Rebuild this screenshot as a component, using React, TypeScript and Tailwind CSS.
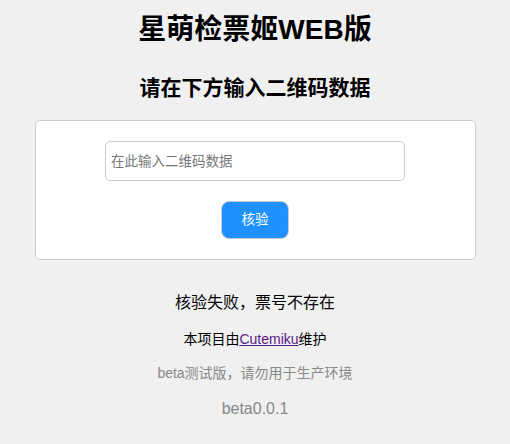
export default function App() {
  const font = { fontFamily: '"Liberation Sans", "Noto Sans CJK SC", sans-serif' };
  return (
    <div className="min-h-[444px] w-full bg-[#f0f0f0] flex flex-col items-center text-black" style={font}>
      <h1 className="mt-[12px] text-[28px] leading-[36px] font-bold">星萌检票姬WEB版</h1>
      <h2 className="mt-[25px] text-[21px] leading-[30px] font-bold">请在下方输入二维码数据</h2>
      <div className="mt-[17px] w-[441px] h-[140px] bg-white border border-[#cccccc] rounded-[5px] flex flex-col items-center">
        <input
          className="mt-[20px] w-[300px] h-[40px] border border-[#cccccc] rounded-[5px] px-[5px] text-[13.5px] outline-none placeholder:text-[#777]"
          placeholder="在此输入二维码数据"
          autoFocus
        />
        <button className="mt-[20px] w-[68px] h-[38px] bg-[#1e90ff] text-white text-[13.5px] rounded-[8px] border border-[#cccccc]">核验</button>
      </div>
      <p className="mt-[32px] text-[16px] leading-[22px]">核验失败，票号不存在</p>
      <p className="mt-[15px] text-[14px] leading-[20px]">
        本项目由<a href="#" className="text-[#551a8b] underline">Cutemiku</a>维护
      </p>
      <p className="mt-[14px] text-[14px] leading-[20px] text-[#888]">beta测试版，请勿用于生产环境</p>
      <p className="mt-[14px] text-[16px] leading-[24px] text-[#888]">beta0.0.1</p>
    </div>
  );
}
